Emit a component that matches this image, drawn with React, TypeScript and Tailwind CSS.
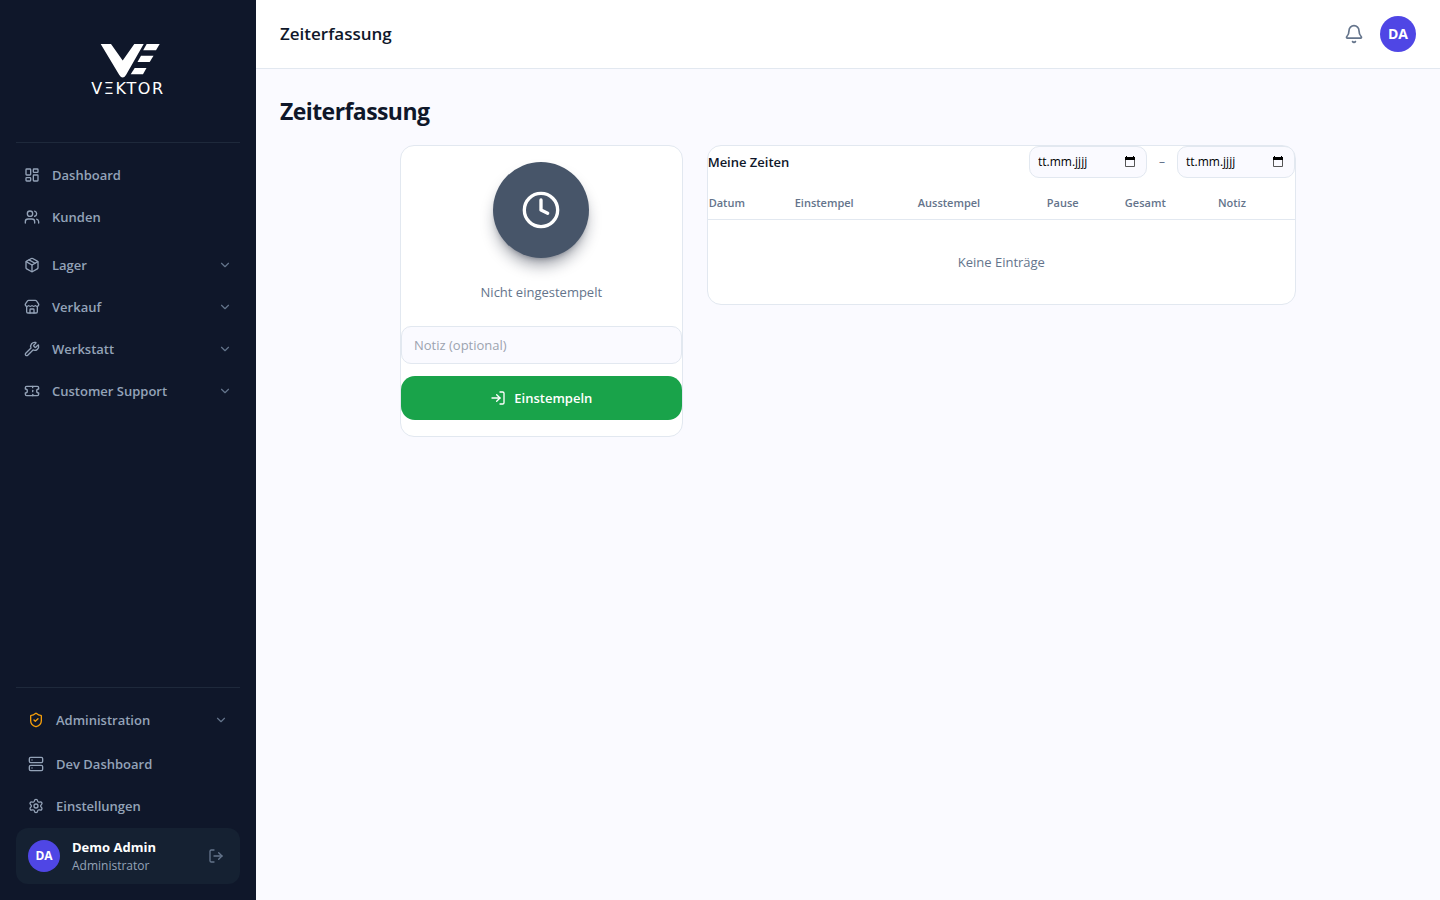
import { useState } from "react";
import {
  Bell, ChevronDown, Clock, LayoutDashboard, LogIn, LogOut, Package,
  Server, Settings, ShieldCheck, Store, Ticket, Users, Wrench,
} from "lucide-react";
import type { LucideIcon } from "lucide-react";
import clsx from "clsx";

type NavItem = { label: string; icon: LucideIcon };

const LINKS: NavItem[] = [
  { label: "Dashboard", icon: LayoutDashboard },
  { label: "Kunden", icon: Users },
];

const GROUPS: NavItem[] = [
  { label: "Lager", icon: Package },
  { label: "Verkauf", icon: Store },
  { label: "Werkstatt", icon: Wrench },
  { label: "Customer Support", icon: Ticket },
];

const SYSTEM_LINKS: NavItem[] = [
  { label: "Dev Dashboard", icon: Server },
  { label: "Einstellungen", icon: Settings },
];

const COLUMNS = [
  { label: "Datum", width: "w-[86px]" },
  { label: "Einstempel", width: "w-[123px]" },
  { label: "Ausstempel", width: "w-[129px]" },
  { label: "Pause", width: "w-[78px]" },
  { label: "Gesamt", width: "w-[93px]" },
  { label: "Notiz", width: "w-[78px]" },
];

const ROW = "flex h-10 w-full items-center gap-3 rounded-xl px-3 text-left text-[13px] leading-5 font-semibold text-[#94a3b8] hover:bg-[#1e293b]";

function Logo() {
  return (
    <a href="#" aria-label="VEKTOR" className="flex flex-col items-center text-white">
      <svg viewBox="-4 0 64 34" className="h-[34px] w-16 fill-current">
        <path d="M0.700 0H11L22.700 16.500L34.300 0H43.700L26 31Q22.700 36 19.300 31Z" />
        <path d="M46.700 0H59.700L56 6.200H43.200Z" />
        <path d="M41 11.700H53.500L49.700 18H37.500Z" />
        <path d="M34.700 24H46.500L43 30.200H30.700Z" />
      </svg>
      <span className="font-['DejaVu_Sans',sans-serif] text-base leading-[22px] tracking-widest">VΞKTOR</span>
    </a>
  );
}

function NavLink({ label, icon: Icon }: NavItem) {
  return (
    <a href="#" className={ROW}>
      <Icon className="h-4 w-4" />
      {label}
    </a>
  );
}

function NavGroup({ label, icon: Icon, accent }: NavItem & { accent?: boolean }) {
  return (
    <button type="button" className={ROW}>
      <Icon className={clsx("h-4 w-4", accent && "text-[#f59e0b]")} />
      <span className="flex-1">{label}</span>
      <ChevronDown className="h-3.5 w-3.5 text-[#64748b]" />
    </button>
  );
}

function Sidebar() {
  return (
    <aside className="flex w-64 shrink-0 flex-col bg-[#0f172a] px-4">
      <div className="flex h-[143px] items-start justify-center border-b border-[#1e293b] pt-11">
        <Logo />
      </div>
      <nav className="-mx-1 flex flex-1 flex-col gap-0.5 pt-3">
        {LINKS.map((item) => <NavLink key={item.label} {...item} />)}
        <div className="mt-1.5 flex flex-col gap-0.5">
          {GROUPS.map((item) => <NavGroup key={item.label} {...item} />)}
        </div>
      </nav>
      <div className="flex flex-col gap-0.5 border-t border-[#1e293b] pt-3 pb-4">
        <NavGroup label="Administration" icon={ShieldCheck} accent />
        <div className="mt-0.5 flex flex-col gap-0.5">
          {SYSTEM_LINKS.map((item) => <NavLink key={item.label} {...item} />)}
        </div>
        <div className="flex h-14 items-center gap-3 rounded-xl bg-[#152132] px-3">
          <div className="flex h-8 w-8 items-center justify-center rounded-full bg-[#4f46e5] text-xs font-bold text-white">DA</div>
          <div className="flex-1">
            <p className="text-[13px] leading-5 font-bold text-white">Demo Admin</p>
            <p className="text-xs leading-[18px] text-[#94a3b8]">Administrator</p>
          </div>
          <button type="button" aria-label="Abmelden" className="p-1 text-[#64748b]">
            <LogOut className="h-4 w-4" />
          </button>
        </div>
      </div>
    </aside>
  );
}

function DateField({ label, value, onChange }: { label: string; value: string; onChange: (v: string) => void }) {
  return (
    <label className="flex h-8 w-[118px] items-center rounded-[10px] border border-[#e2e8f0] bg-[#fafaff] pr-2.5 pl-2">
      <input
        aria-label={label}
        value={value}
        onChange={(e) => onChange(e.target.value)}
        placeholder="tt.mm.jjjj"
        className="min-w-0 flex-1 text-xs text-[#0f172a] outline-none placeholder:text-black"
      />
      <svg viewBox="0 0 12 12" className="h-3 w-3">
        <path fill="none" stroke="#555" d="M1.500 3V10.500H10.500V3" />
        <path fill="#000" d="M2 0H3V1H9V0H10V1H11V4H1V1H2Z" />
      </svg>
    </label>
  );
}

export default function App() {
  const [note, setNote] = useState("");
  const [from, setFrom] = useState("");
  const [to, setTo] = useState("");

  return (
    <div className="flex min-h-screen bg-[#fafaff] font-['Open_Sans',sans-serif] text-[#0f172a]">
      <Sidebar />
      <div className="flex min-w-0 flex-1 flex-col">
        <header className="flex h-[69px] items-center justify-between border-b border-[#e2e8f0] bg-white px-6">
          <span className="text-[17px] leading-7 font-semibold">Zeiterfassung</span>
          <div className="flex items-center gap-4">
            <button type="button" aria-label="Benachrichtigungen" className="text-[#64748b]">
              <Bell className="h-5 w-5" />
            </button>
            <button type="button" className="h-9 w-9 rounded-full bg-[#4f46e5] text-sm font-bold text-white">DA</button>
          </div>
        </header>

        <main className="p-6">
          <h1 className="mb-4 text-[23px] leading-9 font-bold tracking-tight">Zeiterfassung</h1>

          <div className="mx-auto grid max-w-4xl grid-cols-3 items-start gap-6">
            {/* Stempeluhr */}
            <section className="flex flex-col items-center rounded-[14px] border border-[#e2e8f0] bg-white py-4">
              <div className="flex h-24 w-24 items-center justify-center rounded-full bg-[#475569] text-white shadow-lg shadow-slate-900/40">
                <Clock className="h-10 w-10" />
              </div>
              <p className="mt-6 text-[13px] leading-5 text-[#64748b]">Nicht eingestempelt</p>
              <input
                aria-label="Notiz (optional)"
                value={note}
                onChange={(e) => setNote(e.target.value)}
                placeholder="Notiz (optional)"
                className="mt-6 h-[38px] w-full rounded-[10px] border border-[#e2e8f0] bg-[#fafaff] px-3 text-[13px] outline-none placeholder:text-[#9ca3af]"
              />
              <button type="button" className="mt-3 flex h-11 w-full items-center justify-center gap-2 rounded-[14px] bg-[#19a34a] text-[13px] leading-5 font-semibold text-white hover:bg-green-700">
                <LogIn className="h-4 w-4" />
                Einstempeln
              </button>
            </section>

            {/* Zeiteinträge */}
            <section className="col-span-2 rounded-[14px] border border-[#e2e8f0] bg-white">
              <div className="flex items-center justify-between">
                <h2 className="text-[13px] leading-5 font-semibold">Meine Zeiten</h2>
                <div className="flex items-center gap-3 text-xs text-[#64748b]">
                  <DateField label="Von" value={from} onChange={setFrom} />
                  –
                  <DateField label="Bis" value={to} onChange={setTo} />
                </div>
              </div>
              <table className="mt-2.5 w-full table-fixed">
                <thead>
                  <tr className="h-[31px] border-b border-[#e2e8f0] text-left text-[11px] text-[#64748b]">
                    {COLUMNS.map(({ label, width }) => (
                      <th key={label} className={clsx("px-px font-semibold", width)}>{label}</th>
                    ))}
                  </tr>
                </thead>
                <tbody>
                  <tr>
                    <td colSpan={6} className="py-8 text-center text-[13px] leading-5 text-[#64748b]">Keine Einträge</td>
                  </tr>
                </tbody>
              </table>
            </section>
          </div>
        </main>
      </div>
    </div>
  );
}
